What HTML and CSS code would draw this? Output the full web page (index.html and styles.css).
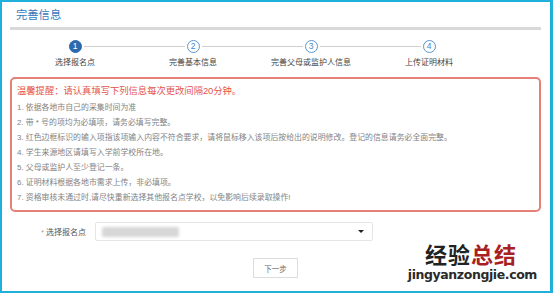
FILE: index.html
```html
<!DOCTYPE html>
<html lang="zh-CN">
<head>
    <meta charset="UTF-8">
    <meta name="viewport" content="width=device-width, initial-scale=1.0">
    <title>完善信息</title>
    <link rel="stylesheet" href="styles.css">
</head>
<body>
    <div class="frame">
        <div class="page">
            <h2 class="title">完善信息</h2>
            <div class="rule"></div>

            <ol class="steps">
                <li class="step active">
                    <div class="step-head"><span class="line"></span><span class="num">1</span><span class="line"></span></div>
                    <div class="step-name">选择报名点</div>
                </li>
                <li class="step">
                    <div class="step-head"><span class="line"></span><span class="num">2</span><span class="line"></span></div>
                    <div class="step-name">完善基本信息</div>
                </li>
                <li class="step">
                    <div class="step-head"><span class="line"></span><span class="num">3</span><span class="line"></span></div>
                    <div class="step-name">完善父母或监护人信息</div>
                </li>
                <li class="step">
                    <div class="step-head"><span class="line"></span><span class="num">4</span><span class="line"></span></div>
                    <div class="step-name">上传证明材料</div>
                </li>
            </ol>

            <div class="notice">
                <p class="notice-title">温馨提醒：请认真填写下列信息每次更改间隔20分钟。</p>
                <ul class="notice-list">
                    <li>1. 依据各地市自己的采集时间为准</li>
                    <li>2. 带 * 号的项均为必填项，请务必填写完整。</li>
                    <li>3. 红色边框标识的输入项指该项输入内容不符合要求，请将鼠标移入该项后按给出的说明修改。登记的信息请务必全面完整。</li>
                    <li>4. 学生来源地区请填写入学前学校所在地。</li>
                    <li>5. 父母或监护人至少登记一条。</li>
                    <li>6. 证明材料根据各地市需求上传，非必填项。</li>
                    <li>7. 资格审核未通过时,请尽快重新选择其他报名点学校，以免影响后续录取操作!</li>
                </ul>
            </div>

            <div class="form-row">
                <label class="form-label"><span class="req">*</span>选择报名点</label>
                <div class="select">
                    <span class="select-value"></span>
                    <span class="caret"></span>
                </div>
            </div>

            <div class="actions">
                <button class="btn">下一步</button>
            </div>
        </div>

        <div class="watermark">
            <div class="wm-big"><span class="wm-dark">经验</span><span class="wm-red">总结</span></div>
            <div class="wm-url">jingyanzongjie.com</div>
        </div>
    </div>
</body>
</html>
```

FILE: styles.css
```css
* {
    margin: 0;
    padding: 0;
    box-sizing: border-box;
}

body {
    font-family: 'Liberation Sans', 'Noto Sans CJK SC', sans-serif;
    background: #fff;
    width: 553px;
    height: 293px;
    overflow: hidden;
}

.frame {
    position: relative;
    width: 553px;
    height: 293px;
    border: 2px solid #1fb0dc;
    border-right-width: 3px;
    background: #fff;
}

.page {
    padding: 0 9px 0 8px;
}

.title {
    font-size: 11.3px;
    font-weight: normal;
    line-height: 14px;
    color: #3479bd;
    padding: 6px 0 0 6px;
}

.rule {
    height: 3px;
    margin-top: 5px;
    background: #d9d9d9;
}

/* steps */
.steps {
    list-style: none;
    display: grid;
    grid-template-columns: repeat(4, 118px);
    margin: 10px 0 0 6px;
}

.step-head {
    display: flex;
    align-items: center;
    height: 13px;
}

.step-head .line {
    flex: 1;
    height: 1px;
    background: #cfcfcf;
}

.step:first-child .line:first-child,
.step:last-child .line:last-child {
    visibility: hidden;
}

.num {
    width: 13px;
    height: 13px;
    margin: 0 2px;
    border: 1px solid #5b95cf;
    border-radius: 50%;
    color: #4b86c4;
    font-size: 8.5px;
    line-height: 11px;
    text-align: center;
}

.step.active .num {
    background: #2d69ad;
    border-color: #2d69ad;
    color: #fff;
}

.step-name {
    margin-top: 5px;
    font-size: 8px;
    line-height: 10px;
    color: #444;
    text-align: center;
}

/* notice */
.notice {
    margin-top: 9px;
    border: 2px solid #e58079;
    border-radius: 5px;
    padding: 5px 5px 5px;
}

.notice-title {
    font-size: 9.3px;
    line-height: 14px;
    color: #e5534b;
}

.notice-list {
    list-style: none;
    margin-top: 2px;
}

.notice-list li {
    font-size: 7.9px;
    line-height: 15px;
    color: #838383;
    white-space: nowrap;
}

/* form */
.form-row {
    display: flex;
    align-items: center;
    margin-top: 10px;
}

.form-label {
    width: 76px;
    margin-right: 9px;
    text-align: right;
    font-size: 8px;
    color: #555;
}

.req {
    color: #999;
    font-size: 7px;
    margin-right: 2px;
}

.select {
    width: 278px;
    height: 19px;
    border: 1px solid #e6e6e6;
    border-radius: 2px;
    display: flex;
    align-items: center;
    justify-content: space-between;
    padding: 0 8px 0 6px;
}

.select-value {
    width: 77px;
    height: 10px;
    background: #d7d7d7;
    border-radius: 2px;
    filter: blur(1.5px);
}

.caret {
    width: 0;
    height: 0;
    border-left: 3px solid transparent;
    border-right: 3px solid transparent;
    border-top: 3px solid #222;
}

.actions {
    display: flex;
    justify-content: center;
    margin-top: 17px;
}

.btn {
    width: 45px;
    height: 20px;
    border: 1px solid #dcdcdc;
    background: #fff;
    font-family: inherit;
    font-size: 7.5px;
    color: #666;
}

/* watermark overlay */
.watermark {
    position: absolute;
    right: 13px;
    bottom: 9px;
    text-align: right;
    pointer-events: none;
}

.wm-big {
    font-size: 22px;
    font-weight: bold;
    line-height: 24px;
    letter-spacing: 1px;
    margin-right: 20px;
}

.wm-dark {
    color: #222;
}

.wm-red {
    color: #a8201f;
}

.wm-url {
    font-family: 'DejaVu Sans', sans-serif;
    font-weight: bold;
    font-size: 12.5px;
    line-height: 14px;
    color: #2a2a2a;
    letter-spacing: -0.4px;
}
```
